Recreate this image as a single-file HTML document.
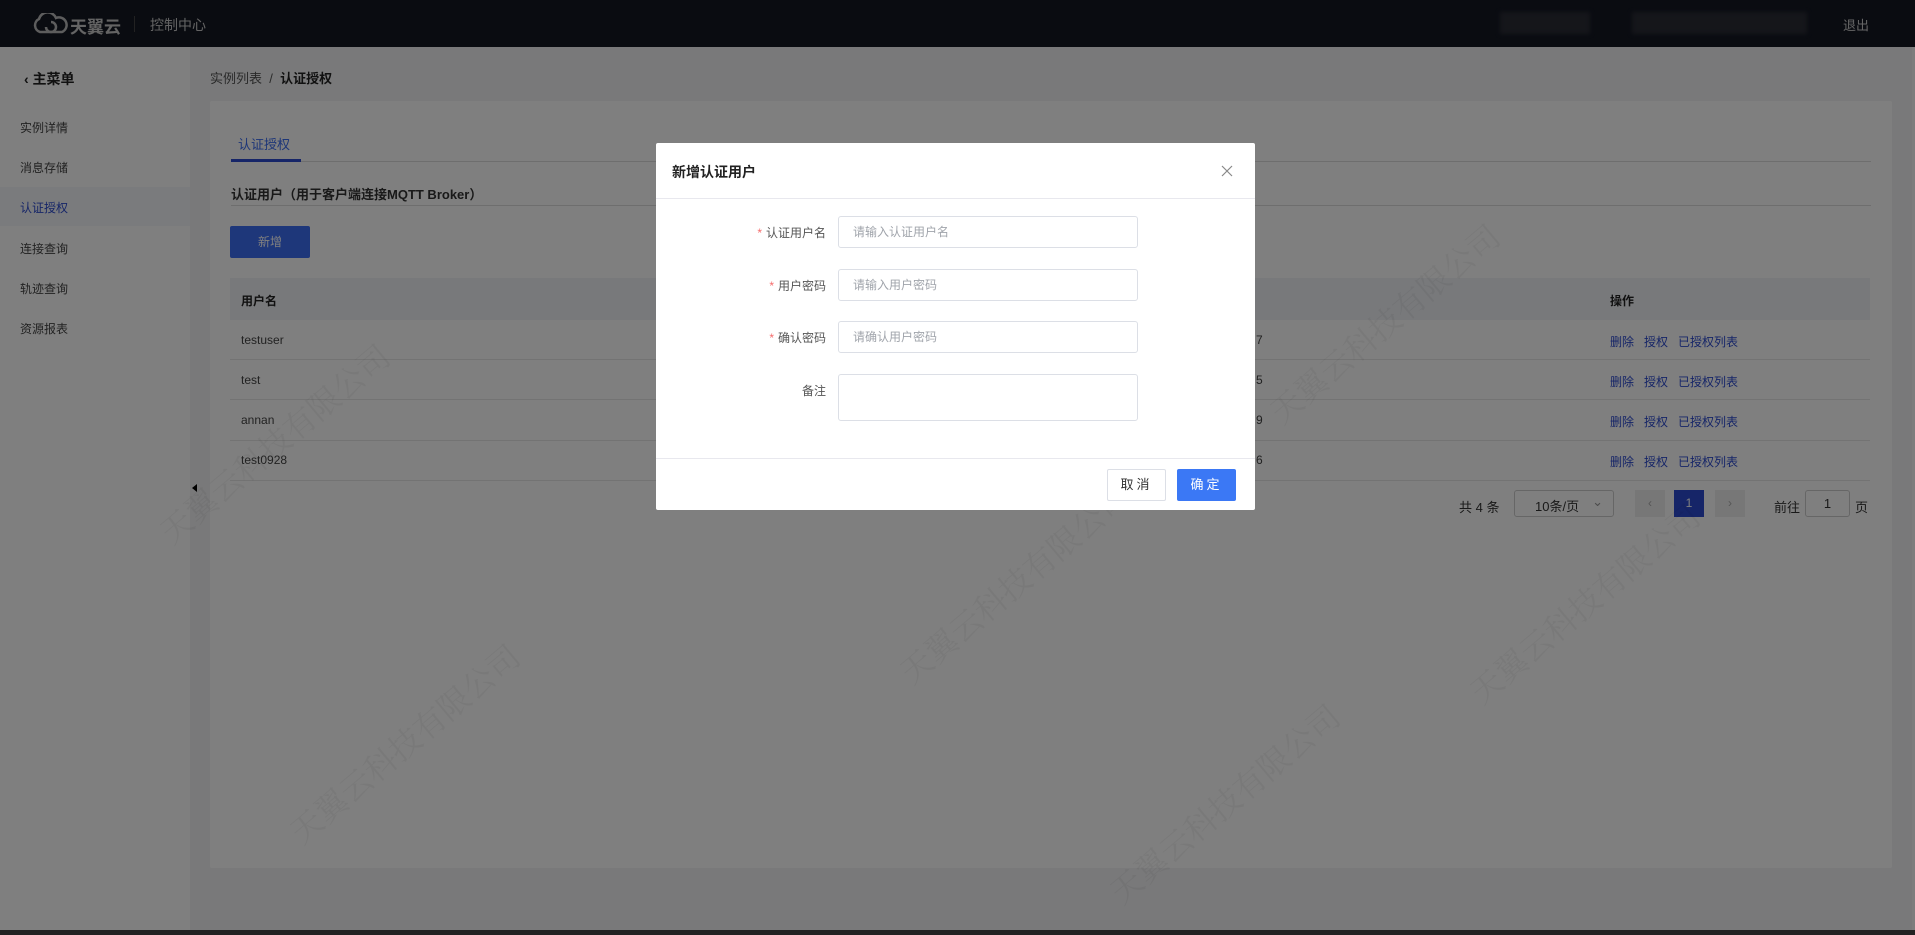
<!DOCTYPE html>
<html><head><meta charset="utf-8"><style>
*{box-sizing:border-box;margin:0;padding:0}
body{width:1915px;height:935px;overflow:hidden;position:relative;background:#f2f3f5;font-family:"Liberation Sans","Noto Sans CJK SC",sans-serif;font-size:12px;color:#333}
.abs{position:absolute}
.hdr{left:0;top:0;width:1915px;height:47px;background:#141823;color:#ccc}
.side{left:0;top:47px;width:190px;height:888px;background:#fff}
.mi{position:absolute;left:20px;font-size:12px;color:#444}
.card{left:210px;top:101px;width:1682px;height:767px;background:#fff;border-radius:2px}
.line{position:absolute;height:1px;background:#e6e6e6}
.td{position:absolute;font-size:12px;color:#444}
.lk{color:#2c4bd0}
.ov{left:0;top:0;width:1915px;height:935px;background:rgba(0,0,0,.5)}
.wm{position:absolute;color:rgba(0,0,0,.045);font-size:32px;font-family:"Noto Serif CJK SC",serif;transform:rotate(-40deg);white-space:nowrap;z-index:5}
.dlg{left:656px;top:143px;width:599px;height:367px;background:#fff;border-radius:2px;z-index:10}
.lab{position:absolute;right:429px;font-size:12px;color:#555;text-align:right}
.lab b{color:#f56c6c;font-weight:normal;margin-right:4px}
.inp{position:absolute;left:182px;width:300px;height:32px;border:1px solid #dcdfe6;border-radius:3px;font-size:12px;color:#a0a4ab;padding:8px 14px;line-height:14px}
</style></head><body>
<div class="abs hdr">
 <svg class="abs" style="left:30px;top:13px" width="40" height="22" viewBox="0 0 40 22"><path d="M10 19 A7 7 0 0 1 9 6 A9 9 0 0 1 26 5 A7 7 0 0 1 32 19 Z" fill="none" stroke="#bbb" stroke-width="2.5"/><path d="M16 14 a5 5 0 1 0 5-5" fill="none" stroke="#bbb" stroke-width="2.5"/></svg>
 <div class="abs" style="left:70px;top:13px;font-size:17px;color:#c8c8c8;font-weight:bold">天翼云</div>
 <div class="abs" style="left:134px;top:16px;width:1px;height:16px;background:#444"></div>
 <div class="abs" style="left:150px;top:15px;font-size:14px;color:#c8c8c8">控制中心</div>
 <div class="abs" style="left:1500px;top:12px;width:90px;height:22px;background:#2a2c35;filter:blur(2px)"></div>
 <div class="abs" style="left:1632px;top:12px;width:175px;height:22px;background:#2a2c35;filter:blur(2px)"></div>
 <div class="abs" style="left:1843px;top:15px;font-size:13px;color:#ccc">退出</div>
</div>
<div class="abs side">
 <div class="abs" style="left:24px;top:22px;font-size:14px;font-weight:bold;color:#222">‹ 主菜单</div>
 <div class="mi" style="top:72px">实例详情</div>
 <div class="mi" style="top:112px">消息存储</div>
 <div class="abs" style="left:0;top:140px;width:190px;height:39px;background:#f4f6fb"></div>
 <div class="mi" style="top:152px;color:#2c4bd0">认证授权</div>
 <div class="mi" style="top:193px">连接查询</div>
 <div class="mi" style="top:233px">轨迹查询</div>
 <div class="mi" style="top:273px">资源报表</div>
</div>
<div class="abs" style="left:192px;top:484px;width:0;height:0;border-top:4px solid transparent;border-bottom:4px solid transparent;border-right:5px solid #000"></div>
<div class="abs" style="left:210px;top:68px;font-size:13px;color:#555">实例列表 &nbsp;/&nbsp; <b style="color:#222">认证授权</b></div>
<div class="abs" style="left:1912px;top:47px;width:3px;height:888px;background:#fafafa"></div>
<div class="abs card">
 <div class="abs" style="left:28px;top:33px;font-size:13px;color:#3b6cf0">认证授权</div>
 <div class="line" style="left:21px;top:60px;width:1640px;background:#ddd"></div>
 <div class="abs" style="left:21px;top:58px;width:70px;height:3px;background:#2c4bd0"></div>
 <div class="abs" style="left:21px;top:83px;font-size:13px;color:#333;font-weight:bold">认证用户（用于客户端连接MQTT Broker）</div>
 <div class="line" style="left:21px;top:104px;width:1640px;background:#ddd"></div>
 <div class="abs" style="left:20px;top:125px;width:80px;height:32px;background:#3d6ef5;border-radius:2px;color:#fff;text-align:center;line-height:32px">新增</div>
 <div class="abs" style="left:20px;top:177px;width:1640px;height:42px;background:#f1f2f6"></div>
 <div class="td" style="left:31px;top:191px;font-weight:bold;color:#222">用户名</div>
 <div class="td" style="left:1400px;top:191px;font-weight:bold;color:#222">操作</div>
 <div class="line" style="left:20px;top:258px;width:1640px"></div>
 <div class="line" style="left:20px;top:298px;width:1640px"></div>
 <div class="line" style="left:20px;top:339px;width:1640px"></div>
 <div class="line" style="left:20px;top:379px;width:1640px"></div>
 <div class="td" style="left:31px;top:232px">testuser</div><div class="td" style="left:1046px;top:232px">7</div><div class="td lk" style="left:1400px;top:232px">删除 &nbsp; 授权 &nbsp; 已授权列表</div>
 <div class="td" style="left:31px;top:272px">test</div><div class="td" style="left:1046px;top:272px">5</div><div class="td lk" style="left:1400px;top:272px">删除 &nbsp; 授权 &nbsp; 已授权列表</div>
 <div class="td" style="left:31px;top:312px">annan</div><div class="td" style="left:1046px;top:312px">9</div><div class="td lk" style="left:1400px;top:312px">删除 &nbsp; 授权 &nbsp; 已授权列表</div>
 <div class="td" style="left:31px;top:352px">test0928</div><div class="td" style="left:1046px;top:352px">6</div><div class="td lk" style="left:1400px;top:352px">删除 &nbsp; 授权 &nbsp; 已授权列表</div>
 <div class="td" style="left:1249px;top:396px;font-size:13px;color:#333">共 4 条</div>
 <div class="abs" style="left:1304px;top:389px;width:100px;height:27px;border:1px solid #ccc;border-radius:3px;font-size:13px;padding:5px 0 0 20px">10条/页<span style="position:absolute;right:10px;top:3px;color:#999">⌄</span></div>
 <div class="abs" style="left:1425px;top:389px;width:30px;height:27px;background:#eee;color:#aaa;text-align:center;line-height:27px">‹</div>
 <div class="abs" style="left:1464px;top:389px;width:30px;height:27px;background:#2c4bd0;color:#fff;text-align:center;line-height:27px">1</div>
 <div class="abs" style="left:1505px;top:389px;width:30px;height:27px;background:#eee;color:#aaa;text-align:center;line-height:27px">›</div>
 <div class="td" style="left:1564px;top:396px;font-size:13px;color:#333">前往</div>
 <div class="abs" style="left:1595px;top:389px;width:45px;height:27px;border:1px solid #ccc;border-radius:3px;text-align:center;line-height:25px;font-size:13px">1</div>
 <div class="td" style="left:1645px;top:396px;font-size:13px;color:#333">页</div>
</div>
<div class="abs ov"></div>
<div class="wm" style="left:640px;top:260px">天翼云科技有限公司</div>
<div class="wm" style="left:130px;top:420px">天翼云科技有限公司</div>
<div class="wm" style="left:870px;top:560px">天翼云科技有限公司</div>
<div class="wm" style="left:1240px;top:300px">天翼云科技有限公司</div>
<div class="wm" style="left:1440px;top:580px">天翼云科技有限公司</div>
<div class="wm" style="left:1080px;top:780px">天翼云科技有限公司</div>
<div class="wm" style="left:260px;top:720px">天翼云科技有限公司</div>
<div class="abs dlg">
 <div class="abs" style="left:16px;top:19px;font-size:14px;font-weight:bold;color:#222">新增认证用户</div>
 <svg class="abs" style="left:565px;top:22px" width="12" height="12" viewBox="0 0 12 12"><path d="M1 1L11 11M11 1L1 11" stroke="#888" stroke-width="1.2"/></svg>
 <div class="line" style="left:0;top:55px;width:599px;background:#e8e8ee"></div>
 <div class="lab" style="top:81px"><b>*</b>认证用户名</div>
 <div class="inp" style="top:73px">请输入认证用户名</div>
 <div class="lab" style="top:134px"><b>*</b>用户密码</div>
 <div class="inp" style="top:126px">请输入用户密码</div>
 <div class="lab" style="top:186px"><b>*</b>确认密码</div>
 <div class="inp" style="top:178px">请确认用户密码</div>
 <div class="lab" style="top:239px">备注</div>
 <div class="inp" style="top:231px;height:47px"></div>
 <div class="line" style="left:0;top:315px;width:599px;background:#e8e8ee"></div>
 <div class="abs" style="left:451px;top:326px;width:59px;height:32px;border:1px solid #dcdfe6;border-radius:2px;text-align:center;line-height:30px;font-size:13px;color:#333;letter-spacing:3px">取消</div>
 <div class="abs" style="left:521px;top:326px;width:59px;height:32px;background:#3b78f5;border-radius:2px;text-align:center;line-height:32px;font-size:13px;color:#fff;letter-spacing:3px">确定</div>
</div>
<div class="abs" style="left:0;top:930px;width:1915px;height:5px;background:#222;z-index:20"></div>
</body></html>
